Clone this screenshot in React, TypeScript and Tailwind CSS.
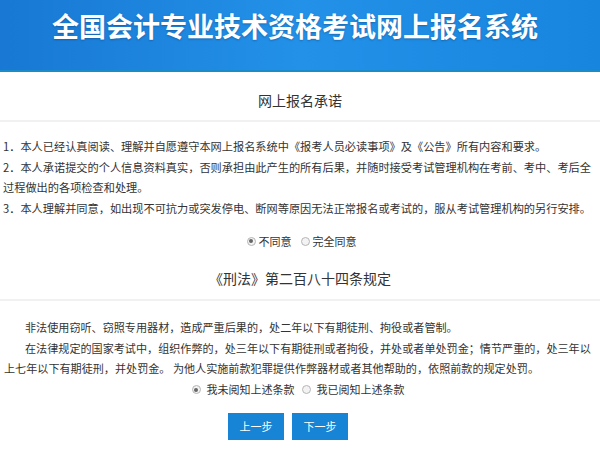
const cjk = "font-['Microsoft_YaHei','Noto_Sans_CJK_SC',sans-serif]";

const Radio = ({ checked }: { checked?: boolean }) => (
  <span className="inline-flex h-[9px] w-[9px] items-center justify-center rounded-full border border-[#b5b5b5] bg-[#f3f3f3]">
    {checked && <span className="h-[4px] w-[4px] rounded-full bg-[#666]" />}
  </span>
);

export default function App() {
  return (
    <div className={`${cjk} h-[449px] w-[600px] overflow-hidden bg-white text-[#333]`}>
      <header className="h-[72px] border-b-2 border-[#1a8cc8] bg-gradient-to-r from-[#1878d3] via-[#2391e8] to-[#1785de] pt-[8px] pr-[10px] text-center">
        <h1 className="text-[27px] leading-[36px] font-bold text-white [text-shadow:0_1px_2px_rgba(0,40,90,0.35)]">
          全国会计专业技术资格考试网上报名系统
        </h1>
      </header>

      <h2 className="border-b-2 border-[#f1f1f1] pt-[18px] pb-[10px] text-center text-[14px] leading-[20px] font-normal">
        网上报名承诺
      </h2>

      <div className="whitespace-nowrap px-[3px] pt-[14px] text-[11.2px] leading-[20.5px]">
        <p>1．本人已经认真阅读、理解并自愿遵守本网上报名系统中《报考人员必读事项》及《公告》所有内容和要求。</p>
        <p>
          2．本人承诺提交的个人信息资料真实，否则承担由此产生的所有后果，并随时接受考试管理机构在考前、考中、考后全
          <br />
          过程做出的各项检查和处理。
        </p>
        <p>3．本人理解并同意，如出现不可抗力或突发停电、断网等原因无法正常报名或考试的，服从考试管理机构的另行安排。</p>
      </div>

      <div className="mt-[13px] flex h-[20px] items-center justify-center gap-[3px] pl-[3px] text-[11px]">
        <Radio checked />
        <span className="mr-[6px]">不同意</span>
        <Radio />
        <span>完全同意</span>
      </div>

      <h2 className="mt-[17px] border-b-2 border-[#f1f1f1] pb-[11px] text-center text-[14px] leading-[20px] font-normal">
        《刑法》第二百八十四条规定
      </h2>

      <div className="whitespace-nowrap px-[4px] pt-[16px] text-[11.1px] leading-[20.5px]">
        <p className="indent-[21px]">非法使用窃听、窃照专用器材，造成严重后果的，处二年以下有期徒刑、拘役或者管制。</p>
        <p className="indent-[21px]">
          在法律规定的国家考试中，组织作弊的，处三年以下有期徒刑或者拘役，并处或者单处罚金；情节严重的，处三年以
          <br />
          上七年以下有期徒刑，并处罚金。 为他人实施前款犯罪提供作弊器材或者其他帮助的，依照前款的规定处罚。
        </p>
      </div>

      <div className="mt-[1px] flex h-[20px] items-center justify-center gap-[6px] pr-[4px] text-[11px]">
        <Radio checked />
        <span className="mr-[1px]">我未阅知上述条款</span>
        <Radio />
        <span>我已阅知上述条款</span>
      </div>

      <div className="mt-[13px] flex justify-center gap-[8px] pr-[24px]">
        <button className="h-[27px] w-[56px] bg-[#1784d6] text-[11px] text-white">上一步</button>
        <button className="h-[27px] w-[56px] bg-[#1784d6] text-[11px] text-white">下一步</button>
      </div>
    </div>
  );
}
